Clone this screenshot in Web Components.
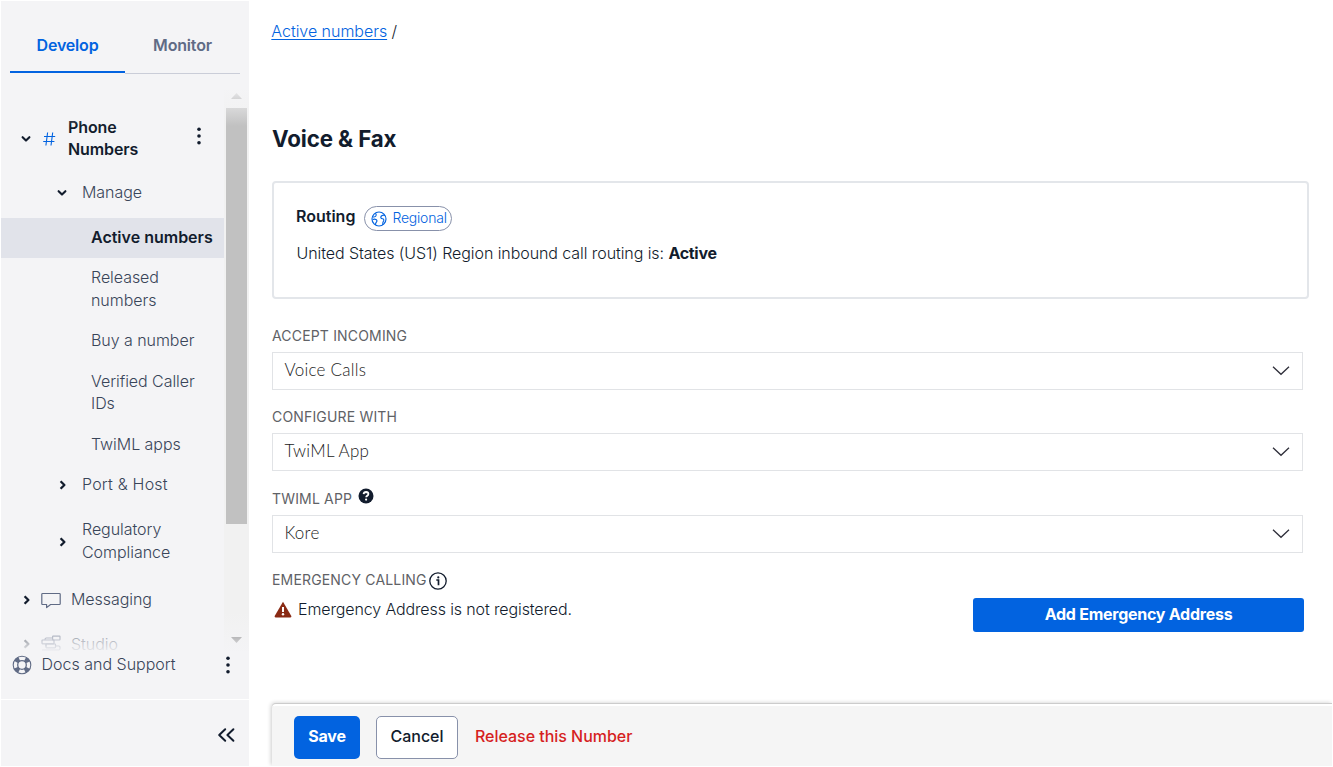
<!DOCTYPE html>
<html lang="en">
<head>
<meta charset="utf-8">
<title>Voice &amp; Fax</title>
<style>
html,body{margin:0;height:100%;overflow:hidden;background:#fff}
body{font-family:Inter,"Liberation Sans",sans-serif;font-size:16px;line-height:22.5px;color:#121c2d}
</style>
</head>
<body>
<console-app></console-app>
<script>
const define = (name, html, setup) => {
  const tpl = document.createElement('template');
  tpl.innerHTML = html;
  customElements.define(name, class extends HTMLElement {
    connectedCallback() {
      if (this.shadowRoot) return;
      this.attachShadow({mode: 'open'}).append(tpl.content.cloneNode(true));
      if (setup) setup(this, this.shadowRoot);
    }
  });
};

const ICONS = {
  down: [12, 12, '<path d="M2.6 4.2 6 7.6 9.4 4.2" fill="none" stroke="#121c2d" stroke-width="2.1" stroke-linecap="round" stroke-linejoin="round"/>'],
  right: [12, 12, '<path d="M4.6 2.2 8.4 6 4.6 9.8" fill="none" stroke="#121c2d" stroke-width="2.3" stroke-linejoin="round"/>'],
  hash: [14, 16, '<path d="M5.600 1.500 3.900 14.500M10.700 1.500 9 14.500M2 5.500h11.200M1.200 10.500h11.200" fill="none" stroke="#0263e0" stroke-width="1.1"/>'],
  dots: [6, 20, '<g fill="#121c2d"><circle cx="3" cy="3.2" r="1.8"/><circle cx="3" cy="10" r="1.8"/><circle cx="3" cy="16.8" r="1.8"/></g>'],
  chat: [20, 17, '<path d="M1.6 1.5h16.8q.8 0 .8.8v9.4q0 .8-.8.8H9.6L5.6 15.6V12.5H1.6q-.8 0-.8-.8V2.3q0-.8.8-.8Z" fill="none" stroke="#606b85" stroke-width="1.2" stroke-linejoin="round"/>'],
  studio: [20, 18, '<g fill="none" stroke="#606b85" stroke-width="1.2"><rect x="11.6" y="1.2" width="7.4" height="3.8" rx=".5"/><path d="M11.6 3H5.4Q4 3 4 4.4v.4"/><rect x="1" y="5" width="12" height="3.8" rx=".5"/><path d="M5 9v2.4"/><rect x="5" y="9" width="9.5" height="3.8" rx=".5"/><path d="M14.5 11h3.3q1.2 0 1.2 1.2v1.6q0 1.2-1.2 1.2H1"/></g>'],
  buoy: [20, 20, '<g fill="none" stroke="#606b85"><circle cx="10" cy="10" r="6.6" stroke-width="5" stroke-dasharray="4.4 5.967" stroke-dashoffset="-2.98"/><circle cx="10" cy="10" r="8.8" stroke-width="1.1"/><circle cx="10" cy="10" r="4.3" stroke-width="1.3"/></g>'],
  collapse: [18, 16, '<path d="M8.2 2.3 2.200 8l6 5.700M16.4 2.300 10.400 8l6 5.700" fill="none" stroke="#121c2d" stroke-width="2" stroke-linecap="round" stroke-linejoin="round"/>'],
  globe: [16, 16, '<g fill="none" stroke="#0263e0" stroke-width="1.15" stroke-linejoin="round"><circle cx="8" cy="8" r="7"/><path d="M1.500 5.800Q4.200 6.400 5 4.800 5.600 3.200 4.400 2.200M1.800 8.500Q3.500 7.600 5 8.500 6.600 9.600 5.500 11 4.300 12 4.600 14M14 4.600Q12.800 3.600 11.300 4.400 9.500 5.200 9.800 6.600 10.200 7.800 11.600 7.700 13 7.800 12.700 9.700 11.600 11 11.700 13.900"/></g>'],
  chevron: [18, 12, '<path d="M1 1.8 9 9.3l8-7.5" fill="none" stroke="#2f2f3a" stroke-width="1.3"/>'],
  help: [16, 16, '<circle cx="8" cy="8" r="7.5" fill="#121c2d"/><path d="M5.6 6.2Q5.8 4 8.1 4q2.3.1 2.3 2 0 1.2-1.3 1.9-.9.5-.9 1.3" fill="none" stroke="#fff" stroke-width="1.8"/><circle cx="8.1" cy="11.6" r="1.1" fill="#fff"/>'],
  info: [18, 18, '<circle cx="9" cy="9" r="8.2" fill="none" stroke="#121c2d" stroke-width="1.3"/><path d="M7.300 8h2.200v5.200" fill="none" stroke="#121c2d" stroke-width="1.7"/><circle cx="9.300" cy="5.400" r="1.1" fill="#121c2d"/>'],
  warn: [18, 17, '<path d="M9 .8 17.3 15q.5 1.4-.9 1.6H1.6Q.2 16.400.7 15Z" fill="#8a2a14"/><path d="M9 6v5" stroke="#fff" stroke-width="2"/><circle cx="9" cy="13.300" r="1.2" fill="#fff"/>'],
  up: [11, 6, '<path d="M0 6 5.500 0 11 6Z" fill="#8c8c8c"/>'],
  dn: [11, 6, '<path d="M0 0h11L5.500 6Z" fill="#606060"/>']
};
define('ui-icon', '<style>:host{display:block;flex:none}svg{display:block}</style><span></span>', (el, root) => {
  const [w, h, body] = ICONS[el.getAttribute('name')];
  root.querySelector('span').innerHTML = `<svg width="${w}" height="${h}" viewBox="0 0 ${w} ${h}">${body}</svg>`;
});

define('nav-tab', `<style>
:host{flex:1;display:flex;justify-content:center;box-sizing:border-box;height:73px;padding-top:33px;font-weight:600;letter-spacing:-.17px;color:#606b85;border-bottom:1px solid #cacdd8}
:host([active]){height:72px;color:#0263e0;border-bottom:2px solid #0263e0}
</style><slot></slot>`);

define('nav-row', `<style>
:host{display:flex;align-items:center;box-sizing:border-box;height:40.500px;padding-left:90px;padding-bottom:1px;color:#394559;font-weight:350;letter-spacing:-.05px;white-space:nowrap}
:host([tall]){height:62.900px}
:host([selected]){height:40px;background:#e1e3ea;color:#121c2d;font-weight:600;letter-spacing:0}
:host([level="2"]){padding-left:81px}
:host([level="1"]){padding-left:70px}
:host([strong]){color:#121c2d;font-weight:600;letter-spacing:-.1px;line-height:22px}
.lead{display:flex;align-items:center;gap:9px;height:100%}
:host([level="2"]) .lead{width:26px;margin-left:-26px}
:host([level="1"]) .lead{width:51px;margin-left:-51px}
.label{flex:1}
</style><div class="lead"><slot name="lead"></slot></div><div class="label"><slot></slot></div><slot name="end"></slot>`);

define('scroll-rail', `<style>
:host{display:grid;grid-template-rows:19px 416px 1fr 18px;justify-items:center;background:#f1f1f1;width:25px;height:562px}
ui-icon{align-self:start;padding-top:4px}
.thumb{width:21px;height:416px;background:#c1c1c1}
</style><ui-icon name="up"></ui-icon><div class="thumb"></div><div></div><ui-icon name="dn"></ui-icon>`);

define('side-nav', `<style>
:host{display:flex;flex-direction:column;width:248px;height:765px;margin:1px 0 0 1px;background:#f4f4f6}
.tabs{display:flex;margin:0 9px;height:73px}
.scroll{position:relative;display:grid;grid-template-columns:223px 25px;height:578px;overflow:hidden}
.list{padding-top:31px}
scroll-rail{margin-top:15px}
.scroll::before,.scroll::after{content:"";position:absolute;left:0;right:0;z-index:1}
.scroll::before{top:0;height:52px;background:linear-gradient(#f4f4f6 25%,#f4f4f600)}
.scroll::after{bottom:0;height:40px;background:linear-gradient(#f4f4f600,#f4f4f6f2)}
.docs{display:flex;align-items:center;box-sizing:border-box;height:47px;padding:0 18px 22px 11px;color:#394559;font-weight:350;letter-spacing:0}
.docs span{flex:1;padding:0 0 1px 9.500px}
.foot{flex:1;border-top:1px solid #fff;display:flex;justify-content:flex-end;align-items:flex-start;padding:27px 14px 0 0}
</style>
<div class="tabs"><nav-tab active>Develop</nav-tab><nav-tab>Monitor</nav-tab></div>
<div class="scroll"><div class="list">
<nav-row level="1" strong style="height:67px;padding-left:67px"><ui-icon slot="lead" name="down" style="margin:2px 0 0 3px"></ui-icon><ui-icon slot="lead" name="hash" style="margin:1px 0 0 1px"></ui-icon>Phone<br>Numbers<ui-icon slot="end" name="dots" style="margin:0 22px 5px 0"></ui-icon></nav-row>
<nav-row level="2" style="height:46px;padding-bottom:5px"><ui-icon slot="lead" name="down" style="margin-top:1px"></ui-icon>Manage</nav-row>
<nav-row selected>Active numbers</nav-row>
<nav-row tall>Released<br>numbers</nav-row>
<nav-row>Buy a number</nav-row>
<nav-row tall>Verified Caller<br>IDs</nav-row>
<nav-row>TwiML apps</nav-row>
<nav-row level="2" style="height:40px;letter-spacing:.2px"><ui-icon slot="lead" name="right" style="margin-top:2px"></ui-icon>Port &amp; Host</nav-row>
<nav-row level="2" style="height:72.500px"><ui-icon slot="lead" name="right" style="margin-top:3px"></ui-icon>Regulatory<br>Compliance</nav-row>
<nav-row level="1" style="height:45px"><ui-icon slot="lead" name="right" style="margin-top:1px"></ui-icon><ui-icon slot="lead" name="chat" style="margin-top:3px"></ui-icon>Messaging</nav-row>
<nav-row level="1" style="height:29px;padding-top:15px;padding-bottom:0;line-height:14px"><ui-icon slot="lead" name="right"></ui-icon><ui-icon slot="lead" name="studio"></ui-icon>Studio</nav-row>
</div><scroll-rail></scroll-rail></div>
<div class="docs"><ui-icon name="buoy"></ui-icon><span>Docs and Support</span><ui-icon name="dots"></ui-icon></div>
<div class="foot"><ui-icon name="collapse"></ui-icon></div>`);

define('routing-card', `<style>
:host{display:block;box-sizing:border-box;width:1037px;height:118px;border:2px solid #e3e6ea;border-radius:4px;padding:23px 22px}
.top{display:flex;align-items:flex-start;gap:9px;height:26px}
.top b{margin-top:-1px;font-weight:600}
.pill{display:flex;align-items:center;gap:5px;box-sizing:border-box;width:88px;height:25px;border:1px solid #8891aa;border-radius:13px;padding-left:6px;font-size:14px;font-weight:350;letter-spacing:-.2px;color:#0263e0}
.info{margin-top:10px;padding-left:.5px;font-weight:350;letter-spacing:-.075px}
.info b{font-weight:700;letter-spacing:-.3px}
</style><div class="top"><b>Routing</b><span class="pill"><ui-icon name="globe"></ui-icon><slot name="tag"></slot></span></div><div class="info"><slot></slot> <b><slot name="state"></slot></b></div>`);

define('form-label', `<style>
:host{display:flex;align-items:center;height:20px;line-height:20px;font-size:14px;letter-spacing:.17px;color:#606266}
</style><slot></slot>`);

define('select-box', `<style>
:host{display:flex;align-items:center;justify-content:space-between;box-sizing:border-box;width:1031px;height:38px;border:1px solid #e1e3e6;padding:0 12.500px 3px 11.500px;font:300 17px/22px Lato,sans-serif;letter-spacing:.25px;color:#222}
</style><slot></slot><ui-icon name="chevron" style="padding-top:3px"></ui-icon>`);

define('ui-button', `<style>
:host{display:flex;align-items:center;justify-content:center;box-sizing:border-box;height:43px;padding-bottom:2px;border-radius:5px;background:#0263e0;color:#fff;font-weight:700;letter-spacing:-.25px}
:host([plain]){background:#fff;border:1px solid #8891aa;color:#121c2d;font-weight:500;letter-spacing:0}
:host([link]){background:none;color:#d61f1f;font-weight:500;letter-spacing:-.03px}
</style><slot></slot>`);

define('action-bar', `<style>
:host{display:flex;box-sizing:border-box;width:1060px;height:62px;padding:10px 0 0 22px;background:linear-gradient(#666,#666) 87px -1px/3px 1px no-repeat border-box #f5f5f5;background-clip:padding-box;border-top:2px solid #fff;border-radius:4px 0 0 0;box-shadow:0 -1px 0 #ccc,-1px -1px 4px #0003;clip-path:inset(-8px 0 0 -8px)}
</style><slot></slot>`);

define('number-page', `<style>
:host{display:flex;flex-direction:column;width:1061px;height:766px;margin-left:23px;box-sizing:border-box}
.body{display:flex;flex-direction:column;height:704px;flex:none;box-sizing:border-box}
.crumb{margin-top:20px;height:23px;font-weight:350;letter-spacing:-.03px;margin-left:-.7px}
.crumb a{color:#0263e0;text-decoration:underline;text-underline-offset:2px;text-decoration-skip-ink:none}
h1{margin:82px 0 0;height:28px;font-size:22.300px;line-height:28px;font-weight:700;letter-spacing:-.1px}
routing-card{margin-top:28px}
form-label{margin-top:27px}
select-box{margin-top:6px}
select-box + form-label{margin-top:17px}
.em{display:flex;justify-content:space-between;width:1032px}
.msg{display:flex;gap:6px;padding:8px 0 0 2px;font-weight:350;letter-spacing:-.12px}
</style>
<div class="body">
<div class="crumb"><a>Active numbers</a> /</div>
<h1>Voice &amp; Fax</h1>
<routing-card>United States (US1) Region inbound call routing is:<span slot="tag">Regional</span><span slot="state">Active</span></routing-card>
<form-label>ACCEPT INCOMING</form-label><select-box>Voice Calls</select-box>
<form-label>CONFIGURE WITH</form-label><select-box>TwiML App</select-box>
<form-label style="margin-top:18px">TWIML APP<ui-icon name="help" style="margin:0 0 6px 5.500px"></ui-icon></form-label><select-box>Kore</select-box>
<form-label>EMERGENCY CALLING<ui-icon name="info" style="margin:2px 0 0 2px"></ui-icon></form-label>
<div class="em"><div class="msg"><ui-icon name="warn" style="padding-top:3px"></ui-icon>Emergency Address is not registered.</div><ui-button style="width:331px;height:34px;margin-top:8px;border-radius:3px;padding-bottom:1px">Add Emergency Address</ui-button></div>
</div>
<action-bar><ui-button style="width:66px">Save</ui-button><ui-button plain style="width:82px;margin-left:16px">Cancel</ui-button><ui-button link style="margin-left:17px">Release this Number</ui-button></action-bar>`);

define('console-app', `<style>:host{display:flex;width:1333px;height:767px;overflow:hidden}</style><side-nav></side-nav><number-page></number-page>`);
</script>
</body>
</html>
